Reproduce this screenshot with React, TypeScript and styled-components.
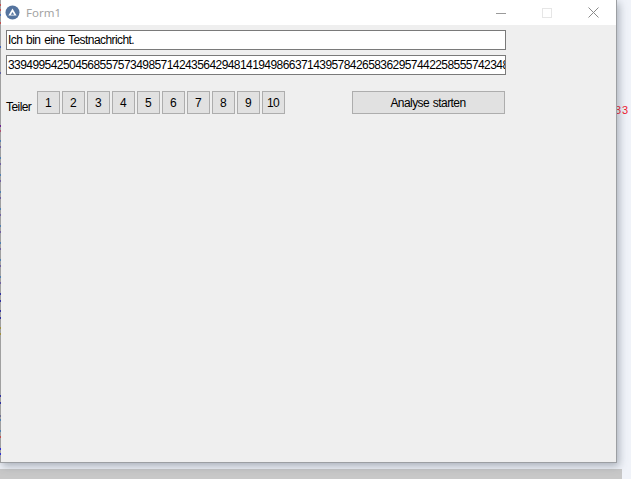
import React from "react";
import styled, { createGlobalStyle } from "styled-components";

const Global = createGlobalStyle`
  html, body { margin: 0; padding: 0; overflow: hidden; background: #f0f3f9; }
  #root { width: 631px; height: 479px; }
  * { box-sizing: border-box; }
`;

const Desktop = styled.div`
  position: relative;
  width: 631px;
  height: 479px;
  background: #f0f3f9;
  overflow: hidden;
  display: flex;
  flex-direction: column;
`;

const WindowFrame = styled.div`
  position: relative;
  z-index: 1;
  width: 617px;
  height: 463px;
  flex: none;
  background: #efefef;
  border-left: 1px solid #a0a0a0;
  border-right: 1px solid #9c9fa3;
  border-bottom: 1px solid #9c9fa3;
  box-shadow: 2px 3px 8px rgba(70, 80, 95, 0.42);
  display: flex;
  flex-direction: column;
  font-family: "Liberation Sans", Arial, sans-serif;
  font-size: 12px;
  letter-spacing: -0.57px;
  word-spacing: 1px;
  color: #000;
`;

const TitleBar = styled.div`
  height: 25px;
  flex: none;
  background: #fff;
  display: flex;
  align-items: center;
  padding-left: 4px;
`;

const Title = styled.span`
  margin-left: 6px;
  font-family: "Noto Sans", sans-serif;
  font-size: 11.5px;
  letter-spacing: 0;
  color: #a3a3a3;
  flex: 1;
`;

const WinButton = styled.div`
  width: 46px;
  height: 25px;
  display: flex;
  align-items: center;
  justify-content: center;
`;

const Content = styled.div`
  flex: 1;
  padding: 5px 0 0 5px;
  display: flex;
  flex-direction: column;
`;

const Field = styled.div`
  width: 500px;
  height: 20px;
  margin-bottom: 5px;
  border: 1px solid #7a7a7a;
  background: #fff;
  padding: 0 2px 0 1px;
  line-height: 18px;
  white-space: nowrap;
  overflow: hidden;
`;

const ButtonRow = styled.div`
  display: flex;
  align-items: flex-start;
  margin-top: 11px;
`;

const Label = styled.span`
  width: 31px;
  padding-top: 9px;
  line-height: 14px;
  flex: none;
`;

const NumberGroup = styled.div`
  display: flex;
  gap: 2px;
`;

const FormButton = styled.button<{ $width: number }>`
  width: ${(p) => p.$width}px;
  height: 23px;
  padding: 0 1px 0 0;
  flex: none;
  border: 1px solid #adadad;
  border-radius: 0;
  background: #e1e1e1;
  color: #000;
  font: inherit;
  letter-spacing: inherit;
  word-spacing: inherit;
`;

const StartButton = styled(FormButton)`
  margin-left: 67px;
`;

const Glimpse = styled.span`
  position: absolute;
  left: 615px;
  top: 104px;
  font-family: "Liberation Sans", sans-serif;
  font-size: 11px;
  letter-spacing: 1px;
  color: #f02030;
`;

const EdgeMarks = styled.svg`
  position: absolute;
  left: 0;
  top: 0;
  z-index: 2;
`;

const Scrollbar = styled.div`
  width: 622px;
  height: 10px;
  margin-top: 6px;
  background: #c8c8c8;
  flex: none;
`;

const marks: [number, string][] = [
  [4, "#c05050"], [9, "#c05050"], [14, "#5070b0"], [22, "#c05050"], [46, "#4060b0"], [72, "#6060a0"],
  [125, "#702090"], [130, "#b05070"], [140, "#5080b0"], [146, "#7060a0"], [157, "#5080b0"], [163, "#7060a0"],
  [174, "#5080b0"], [180, "#7060a0"], [191, "#5080b0"], [197, "#7060a0"], [208, "#5080b0"], [214, "#7060a0"],
  [225, "#5080b0"], [231, "#7060a0"], [242, "#5080b0"], [248, "#7060a0"], [259, "#5080b0"], [265, "#7060a0"],
  [276, "#5080b0"], [282, "#7060a0"], [293, "#3030a0"], [300, "#3030a0"], [310, "#3030a0"], [317, "#3030a0"],
  [327, "#a09040"], [333, "#a09040"], [395, "#3030a0"], [402, "#3030a0"], [415, "#707090"], [419, "#5080b0"],
  [430, "#5080b0"], [436, "#c05050"], [448, "#3030d0"], [453, "#3030d0"],
];

const Logo = () => (
  <svg width="15" height="15" viewBox="0 0 15 15">
    <circle cx="7.5" cy="7.5" r="7" fill="#55749f" />
    <path d="M7.5 3.6 L11.6 10.4 H3.4 Z" fill="#fff" />
    <path d="M7.5 7 L9.2 9.8 H5.8 Z" fill="#55749f" />
  </svg>
);

const digits = "33949954250456855757349857142435642948141949866371439578426583629574422585557423488";

export default function App() {
  return (
    <Desktop>
      <Global />
      <WindowFrame>
        <TitleBar>
          <Logo />
          <Title>Form1</Title>
          <WinButton>
            <svg width="10" height="10" viewBox="0 0 10 10">
              <path d="M0 5.5H10" stroke="#9a9a9a" />
            </svg>
          </WinButton>
          <WinButton>
            <svg width="10" height="10" viewBox="0 0 10 10">
              <rect x="0.5" y="0.5" width="9" height="9" fill="none" stroke="#e6e6e6" />
            </svg>
          </WinButton>
          <WinButton>
            <svg width="11" height="11" viewBox="0 0 11 11">
              <path d="M0.5 0.5L10.5 10.5M10.5 0.5L0.5 10.5" stroke="#8a8a8a" />
            </svg>
          </WinButton>
        </TitleBar>
        <Content>
          <Field>Ich bin eine Testnachricht.</Field>
          <Field>{digits}</Field>
          <ButtonRow>
            <Label>Teiler</Label>
            <NumberGroup>
              {[1, 2, 3, 4, 5, 6, 7, 8, 9, 10].map((n) => (
                <FormButton key={n} $width={23}>
                  {n}
                </FormButton>
              ))}
            </NumberGroup>
            <StartButton $width={153}>Analyse starten</StartButton>
          </ButtonRow>
        </Content>
      </WindowFrame>
      <Scrollbar />
      <Glimpse>33</Glimpse>
      <EdgeMarks width="1" height="479" viewBox="0 0 1 479">
        {marks.map(([y, c]) => (
          <rect key={y} x="0" y={y} width="1" height="2" fill={c} />
        ))}
      </EdgeMarks>
    </Desktop>
  );
}
